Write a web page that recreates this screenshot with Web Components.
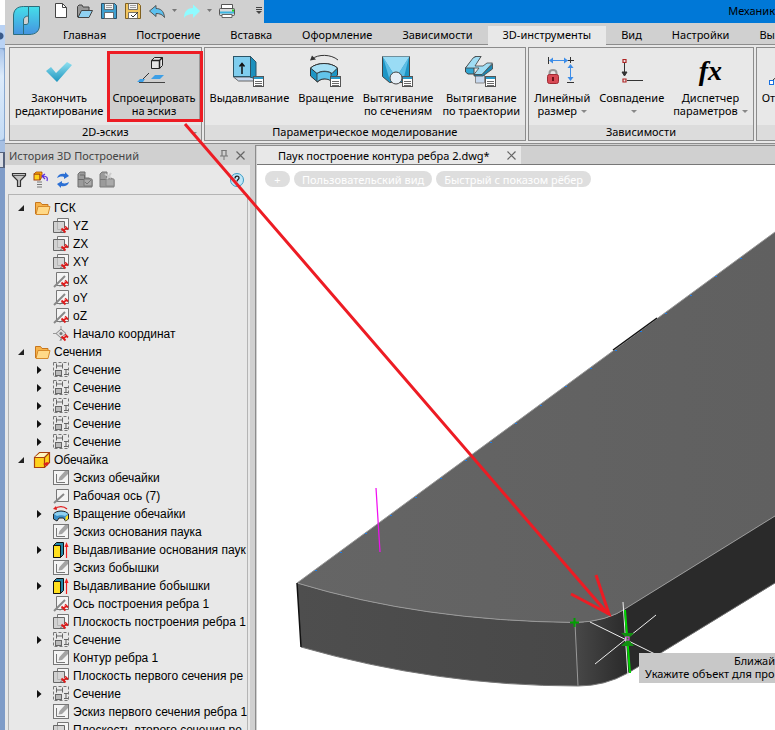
<!DOCTYPE html>
<html lang="ru">
<head>
<meta charset="utf-8">
<title>Механика</title>
<style>
html, body { margin: 0; height: 100%; }
body { font: 11px/13px "Noto Sans", "Open Sans", sans-serif; color: #000; overflow: hidden; background: #fff; }
</style>
</head>
<body>
<cad-app></cad-app>
<script>
const svg = (w, h, body) => `<svg width="${w}" height="${h}" viewBox="0 0 ${w} ${h}" fill="none" aria-hidden="true">${body}</svg>`;

const pin = '<path d="M7 14.5l3-3" stroke="#666"/><path d="M8.5 10.5l4 4M10.5 12.5l3-3M12 8.5l3 3" stroke="#dd1c1c" stroke-width="1.8"/><path d="M11 11l2-2" stroke="#ff7a7a" stroke-width=".8"/>';
const listBadge = '<rect x="20.5" y="21.5" width="10" height="10" fill="#fff" stroke="#555"/><path d="M21 23h9" stroke="#2a9ac8" stroke-width="2"/><path d="M22 26.5h7M22 28.5h7M22 30.5h7" stroke="#444" stroke-width=".8"/>';
const floppy = '<path d="M.5 .5h13l2 2v13H.5z" fill="#3fa0d0" stroke="#2b4f66"/><path d="M3.5 .5h9v6h-9z" fill="#f4f4f4" stroke="#555" stroke-width=".8"/><path d="M5 2.5h6M5 4.5h6" stroke="#888" stroke-width=".8"/><path d="M3.5 9.5h9v6h-9z" fill="#fff" stroke="#555" stroke-width=".8"/>';

const ICONS = {
  logo: svg(27, 29, '<defs><linearGradient id="g" x1="0" y1="0" x2="0" y2="29" gradientUnits="userSpaceOnUse"><stop offset="0" stop-color="#45e0ea"/><stop offset="1" stop-color="#4592e0"/></linearGradient></defs><path d="M10.5 .5H15.5V10C12 10 10.5 12 10.5 14V28.5H.5V10C.5 4 4 .5 10.5 .5z" fill="url(#g)" stroke="#2d6d7c"/><path d="M15.5 .5H26.5V19C26.5 25 23 28.5 16 28.5H10.5V18.5H13C15 18.5 15.5 17 15.5 16z" fill="url(#g)" stroke="#2d6d7c"/>'),
  file: svg(16, 17, '<path d="M2.5 1.5h7l4 4v10h-11z" fill="#fff" stroke="#444"/><path d="M9.5 1.5v4h4" stroke="#444"/>'),
  open: svg(16, 16, '<path d="M.5 14V3.5l1.5-1.5h3l1 2h6v3" fill="#999" stroke="#444"/><path d="M1 14.5l3.5-7h11l-3.5 7z" fill="#8fd0f0" stroke="#444"/>'),
  save: svg(16, 16, floppy),
  saveas: svg(16, 16, floppy.replace('#3fa0d0', '#f2c660').replace('#2b4f66', '#806020') + '<path d="M6 12l2 2 5-5" stroke="#333"/>'),
  undo: svg(16, 16, '<path d="M.5 8L7 2.5v3c4 0 8 2 8.5 9-2-3-4.5-4-8.5-4v3z" fill="#5cc0ee" stroke="#4a4a4a" stroke-width=".9"/>'),
  redo: svg(16, 16, '<path d="M16 8L9 1.5v3.5C4 5 0 8 0 15c2-3 5-4 9-4v4z" fill="#8ffbff"/>'),
  caret: svg(5, 3, '<path d="M0 0h5L2.5 3z" fill="#777"/>'),
  print: svg(16, 16, '<path d="M2.5 6V1.5h11V6" fill="#fff" stroke="#555"/><rect x=".5" y="5.5" width="15" height="7" rx="1" fill="#d8d8d8" stroke="#555"/><path d="M1 9.5h14" stroke="#3cb4e0" stroke-width="2"/><path d="M13 7.5h2" stroke="#2c2" stroke-width="2"/><path d="M3 11.5h10v3H3z" fill="#fff" stroke="#666"/>'),
  custom: svg(6, 7, '<path d="M0 .5h6M0 2.5h6" stroke="#444"/><path d="M0 4h6L3 7z" fill="#444"/>'),

  check: svg(32, 32, '<defs><linearGradient id="c" x1="0" y1="0" x2="0" y2="1"><stop offset="0" stop-color="#8fe0f0"/><stop offset="1" stop-color="#1f96bf"/></linearGradient></defs><path d="M3 16l5-4 5 6L24 7l5 3-15 17z" fill="url(#c)"/>'),
  project: svg(32, 32, '<path d="M13.5 5.5l3-3h8v8l-3 3h-8z" fill="#e4e4e4" stroke="#222"/><path d="M13.5 5.5h8v8M21.5 5.5l3-3" stroke="#222" stroke-width="1.5"/><path d="M1 27.5h26" stroke="#444"/><path d="M3 26l8-8" stroke="#333"/><path d="M-1 27l3-3h5l-2 3zM13 24l4-4h9l-4 4z" fill="#3d9fe6"/>'),
  extrude: svg(32, 32, '<path d="M.5 22l5 4h15v-4z" fill="#c6d8ee" stroke="#666"/><path d="M17 1l6 6v17l-6-2z" fill="#1b90bd" stroke="#2a5568"/><rect x=".5" y="1.5" width="17" height="20" fill="#7fcdee" stroke="#2a5568"/><path d="M9 19V9M6.5 11.5L9 8.5l2.5 3" stroke="#111" stroke-width="1.5"/>' + listBadge),
  revolve: svg(32, 32, '<path d="M2 4C8-1 21-1 28 5" stroke="#333"/><path d="M0 5.5l2-5 4 4z" fill="#333"/><path d="M.5 13C7 7 21 7 27.5 13v7l-6 6c-4-3-10-3-14 1l-7-6z" fill="#1d96c5" stroke="#333"/><path d="M.5 13C7 7 21 7 27.5 13L22 18.5c-4-3-11-3-15 0z" fill="#a6e0f6" stroke="#333"/><path d="M7 18.5V27c4-4 10-4 14-1v-8c-4-2-10-2-14 .5z" fill="#62c4ea" stroke="#333" stroke-width=".8"/>' + listBadge),
  loft: svg(32, 32, '<path d="M.5 1.5h27v20l-7 6h-13l-7-6z" fill="#1d96c5" stroke="#444"/><path d="M.5 1.5h27L17 18h-6z" fill="#9adcf5"/><path d="M1 2l10 16-3 8zM27 2L17 18l4 8z" fill="#5bbde4"/><circle cx="14" cy="23" r="6" fill="#e6eef5" stroke="#444"/>' + listBadge),
  sweep: svg(32, 32, '<path d="M10.5 19h9v9h-9z" fill="#c6d8ee" stroke="#888"/><path d="M.5 13L10 1.5h6L9 11v8H3L.5 17z" fill="#2fa5d2" stroke="#444"/><path d="M27.5 9v5L18 21H9v-2h8z" fill="#1b88b4" stroke="#444" stroke-width=".8"/><path d="M.5 13L8 3l3-1.5h5L10 11h8l4-3h5.5L17 19.5H9L14 13z" fill="#a0ddf4" stroke="#444" stroke-width=".8"/>' + listBadge),
  linear: svg(32, 32, '<path d="M2.5 2v7M20 5.5h8M24.5 2v6M21 27.5h7" stroke="#333"/><path d="M4 5.5h18M24.5 10v15" stroke="#3d8de8"/><path d="M3 5.5l4-3v6zM22 5.5l-4-3v6zM24.5 9l-3 4h6zM24.5 26l-3-4h6z" fill="#3d8de8"/><path d="M3.5 20v-2c0-4 7-4 7 0v2" stroke="#999" stroke-width="2"/><rect x="1.5" y="19.5" width="11" height="9" rx="2" fill="#d84a55" stroke="#a02a33"/><path d="M7 22v4" stroke="#701018" stroke-width="2"/>'),
  coincide: svg(32, 32, '<path d="M8.5 8v10" stroke="#333"/><path d="M6 17h5l-2.5 4zM11 25.5h16" fill="#333" stroke="#333"/><path d="M7 4.5h3v3H7zM7 24h3v3H7z" stroke="#b02525" stroke-width="1.2"/>'),
  line: svg(32, 32, '<path d="M5 25L20 12" stroke="#333"/><rect x="1.5" y="25.5" width="4" height="4" fill="#fff" stroke="#1870e0"/>'),

  filter: svg(14, 14, '<path d="M.5 .5h13v2l-5 5v6h-3v-6l-5-5z" fill="#c4c4c4" stroke="#333" stroke-width="1.2"/><path d="M1 2.5h12" stroke="#555"/>'),
  rollback: svg(17, 17, '<rect x="1" y="3" width="6" height="6" fill="#ffd21c" stroke="#a34310"/><path d="M1 3l2-2h6v5L7 9V3z" fill="#ffb000" stroke="#a34310" stroke-width=".8"/><path d="M4 11h5M4 13.5h5M4 16h5" stroke="#777"/><path d="M14 10c1-3 0-5-4-5M12 3l-3 2 3 3" stroke="#5b2be0" stroke-width="1.2"/>'),
  refresh: svg(14, 16, '<path d="M1 6c1-4 5-5 8-4V0l4 4-5 3V5C5 4 3 5 1 6z" fill="#2b6fd4"/><path d="M13 10c-1 4-5 5-8 4v2l-4-4 5-3v2c3 1 5 0 7-1z" fill="#2b6fd4"/>'),
  cubes: svg(16, 16, '<path d="M1 2l2-2h5l0 6h4l3 2v7H1z" fill="#9b9b9b" stroke="#6f6f6f"/><path d="M1 7.5h7M7.5 3v11M3 3h4" stroke="#6a6a6a"/><path d="M7 7h8v7H7z" fill="#aaa" stroke="#777"/><path d="M8 10l2 2 4-4" stroke="#777"/>'),
  cubesx: svg(16, 16, '<path d="M1 2l2-2h5l0 6h4l3 2v7H1z" fill="#9b9b9b" stroke="#7a7a7a"/><path d="M1 7.5h7M7.5 3v11" stroke="#777"/><path d="M7 7h8v7H7z" fill="#aaa" stroke="#888"/><path d="M6 2l6 4M12 1L8 7" stroke="#ccc" stroke-width="2"/>'),
  help: svg(14, 14, '<circle cx="7" cy="7" r="6.5" fill="#bfe6f7" stroke="#3a9cc4"/><path d="M5 5.5c0-3 4-3 4-.5 0 1.5-2 1.5-2 3.5M7 10v1.5" stroke="#222" stroke-width="1.3"/>'),
  pushpin: svg(8, 10, '<path d="M2 0v6M6 0v6" stroke="#777" stroke-width="1.2"/><path d="M1.5 .5h5M0 6h8M4 6v4" stroke="#777"/>'),
  close: svg(9, 9, '<path d="M.5 .5l8 8M8.5 .5l-8 8" stroke="#666" stroke-width="1.2"/>'),

  folder: svg(17, 16, '<path d="M1.5 14V2.5h5l1.5 2h6v3" fill="#f7b34a" stroke="#c8761c"/><path d="M2 14.5l2-8h12l-2 8z" fill="#ffd988" stroke="#d68a2c"/>'),
  plane: svg(17, 16, '<path d="M4.5 .5h11v11h-11z" fill="#f6f6f6" stroke="#777"/><path d="M.5 3.5h11v11H.5z" fill="#c9c9c9" fill-opacity=".75" stroke="#666"/>' + pin),
  axis: svg(17, 16, '<path d="M3.5 .5h12v13h-12z" fill="#f4f4f4" stroke="#777"/><path d="M1 15L12 4" stroke="#888" stroke-width="2"/>' + pin),
  workaxis: svg(17, 16, '<path d="M3.5 1.5h12v12h-12z" fill="#f4f4f4" stroke="#777"/><path d="M1 15L11 6" stroke="#888" stroke-width="2"/>'),
  origin: svg(17, 16, '<path d="M8 0v3M0 7.5h3M8 12v3" stroke="#999"/><path d="M8 3l5 4.5-5 4.5-5-4.5z" fill="#ddd" stroke="#888"/><circle cx="8" cy="7.5" r="1.5" fill="#777"/>' + pin),
  section: svg(17, 16, '<rect x=".5" y=".5" width="15" height="14" stroke="#777" stroke-dasharray="3 2"/><path d="M3.5 1.5v5M9.5 1.5v5M3.5 4h6M11 7.5h4M13 7.5v5M11 12.5h4" stroke="#666"/><rect x="2.5" y="8.5" width="6" height="5" fill="#bbb" stroke="#666"/>'),
  body: svg(17, 17, '<path d="M.5 5.5l5-5h10v10l-5 5H.5z" fill="#ffd21c" stroke="#a8400f" stroke-width="1.2"/><path d="M1 5l5-4h9l-4 4z" fill="#fff6c0"/><path d="M.5 5.5h10v10M10.5 5.5l5-5" stroke="#a8400f" stroke-width="1.2"/><path d="M9 12l4-2 2 1-2 3z" fill="#e02020"/>'),
  sketch: svg(17, 16, '<rect x=".5" y=".5" width="15" height="14" fill="#f4f4f4" stroke="#777"/><path d="M3.5 4v8.5H12" stroke="#777"/><path d="M5.5 10.5L6.5 7 12 1h3v3L9 10z" fill="#a4a4a4"/>'),
  spin: svg(17, 16, '<path d="M2 3C5-.5 11 0 14 3" stroke="#e02020" stroke-width="1.3"/><path d="M0 3l3-3 1 4z" fill="#e02020"/><path d="M.5 8c3-4 12-4 15 0v5l-3 2-2-3H6l-2 3-3.5-2z" fill="#3b8fc8" stroke="#222"/><path d="M1 8c3-3 11-3 14 0l-3 2c-2-1-6-1-8 0z" fill="#8fd0ef"/><path d="M12.5 11l2.5-2v4l-2.5 2z" fill="#ffe020"/>'),
  pull: svg(17, 16, '<path d="M.5 3.5l3-3h7v12l-3 3h-7z" fill="#28a" stroke="#111"/><path d="M.5 3.5h7v12h-7z" fill="#ffdf1e" stroke="#111"/><path d="M13.5 16V3" stroke="#f02020" stroke-width="1.2"/><path d="M11.5 5l2-5 2 5z" fill="#f02020"/>'),
  expanded: svg(7, 7, '<path d="M6 0v6H0z" fill="#222"/>'),
  collapsed: svg(5, 8, '<path d="M0 0l4.5 4L0 8z" fill="#111"/>')
};

const define = (name, render) => customElements.define(name, class extends HTMLElement {
  connectedCallback() {
    if (this.shadowRoot) return;
    this.attachShadow({ mode: 'open' }).innerHTML = render(this);
  }
});
const RESET = 'button{font:inherit;color:inherit;background:none;border:0;padding:0;margin:0}svg{display:block}*{box-sizing:border-box}';

define('cad-icon', el => `<style>:host{display:block;flex:none}svg{display:block;overflow:visible}</style>${ICONS[el.getAttribute('name')]}`);

define('edge-strip', () => `<style>
:host{display:flex;flex-direction:column;width:5px;flex:none;background:#7f9cc8;overflow:hidden}
div{flex:none}
.a{height:25px;background:#fff}
.b{height:23px;background:radial-gradient(circle at 0 11px,#3a5a8a 3px,#b9d2f4 4px)}
.c{height:91px;background:linear-gradient(#a9c4ea,#dcebfb 30%,#c3dbf5);border:1px solid #88a8d0;border-left:0;border-radius:0 4px 4px 0}
.d{height:11px;background:#a6bfe2}
.e{height:14px;background:#d8dce4;border:1px solid #55627c;border-width:1px 2px 1px 0}
</style><div class="a"></div><div class="b"></div><div class="c"></div><div class="d"></div><div class="e"></div>`);

define('quick-bar', () => {
  const b = (icon, label, cls = '') => `<button class="${cls}" aria-label="${label}"><cad-icon name="${icon}"></cad-icon></button>`;
  return `<style>${RESET}
:host{display:flex;background:#d0d0d0;padding-left:4px;box-sizing:border-box}
button{width:24px;height:21px;display:grid;place-items:center;flex:none}
.n{width:11px}.e{width:10px;margin-left:auto}
</style>${b('file', 'Создать')}${b('open', 'Открыть')}${b('save', 'Сохранить')}${b('saveas', 'Сохранить как')}${b('undo', 'Отменить')}${b('caret', 'Список отмены', 'n')}${b('redo', 'Повторить')}${b('caret', 'Список повтора', 'n')}${b('print', 'Печать')}${b('custom', 'Настроить', 'e')}`;
});

define('app-header', () => `<style>${RESET}
:host{display:grid;grid-template-columns:40px 219px minmax(0,1fr);grid-template-rows:23px 22px;background:#d0d0d0;flex:none}
.logo{grid-row:1/3;display:grid;place-items:center;padding:0 0 4px 2px;border-bottom:1px solid #8c8c8c}
.title{background:#0078d7;display:flex;justify-content:flex-end;align-items:center;overflow:hidden;white-space:nowrap;padding-bottom:2px}
nav{grid-column:2/4;display:flex;overflow:hidden;min-width:0}
nav button{flex:none;padding:2px 15px 0;height:22px;border-bottom:1px solid #8c8c8c}
nav::before{content:"";flex:none;width:3px;border-bottom:1px solid #8c8c8c}
nav .on{background:#e8e8e8;height:19px;align-self:flex-end;border-bottom-color:#e8e8e8;padding-top:0;padding-bottom:2px}
</style><button class="logo" aria-label="Меню программы"><cad-icon name="logo"></cad-icon></button><quick-bar></quick-bar><div class="title">Механик</div>
<nav>${['Главная', 'Построение', 'Вставка', 'Оформление', 'Зависимости', '3D-инструменты', 'Вид', 'Настройки', 'Вывод'].map(t => `<button${t[0] === '3' ? ' class="on"' : ''}>${t}</button>`).join('')}</nav>`);

define('ribbon-button', el => `<style>${RESET}
:host{display:block;flex:none}
button{width:100%;height:100%;padding:3px 3px 0;border:1px solid transparent;display:flex;flex-direction:column;align-items:center;text-align:center;white-space:nowrap}
:host([active]) button{background:#cfcfcf;border-color:#9a9a9a}
cad-icon{margin-bottom:4px}
.fx{font:italic bold 28px/32px "Liberation Serif",serif;height:32px;margin-bottom:4px}
i{display:inline-block;border:3px solid transparent;border-top-color:#888;border-bottom:0;margin-left:4px;vertical-align:2px}
</style><button>${el.getAttribute('icon') === 'fx' ? '<span class="fx">fx</span>' : `<cad-icon name="${el.getAttribute('icon')}"></cad-icon>`}<span><slot></slot>${el.hasAttribute('menu') ? '<i></i>' : ''}</span></button>`);

define('ribbon-panel', el => `<style>
:host{display:flex;flex-direction:column;flex:none;border:1px solid #8c8c8c;height:94px;box-sizing:border-box}
.row{display:flex;gap:1px;padding:3px 1px 4px;flex:1;min-height:0}
footer{height:15px;background:#dcdcdc;text-align:center;position:relative;white-space:nowrap}
:host([more]) footer::after{content:"";position:absolute;right:4px;top:7px;border:3px solid transparent;border-top-color:#888;border-bottom:0}
</style><div class="row"><slot></slot></div><footer>${el.getAttribute('label')}</footer>`);

define('cad-ribbon', () => `<style>
:host{display:flex;gap:2px;padding:2px 0 2px 4px;background:#e8e8e8;border-bottom:1px solid #8c8c8c;flex:none;overflow:hidden}
</style>
<ribbon-panel label="2D-эскиз" more><ribbon-button icon="check">Закончить<br>редактирование</ribbon-button><ribbon-button icon="project" active>Спроецировать<br>на эскиз</ribbon-button></ribbon-panel>
<ribbon-panel label="Параметрическое моделирование"><ribbon-button icon="extrude">Выдавливание</ribbon-button><ribbon-button icon="revolve">Вращение</ribbon-button><ribbon-button icon="loft">Вытягивание<br>по сечениям</ribbon-button><ribbon-button icon="sweep">Вытягивание<br>по траектории</ribbon-button></ribbon-panel>
<ribbon-panel label="Зависимости"><ribbon-button icon="linear" menu>Линейный<br>размер</ribbon-button><ribbon-button icon="coincide" menu>Совпадение<br></ribbon-button><ribbon-button icon="fx" menu>Диспетчер<br>параметров</ribbon-button></ribbon-panel>
<ribbon-panel label=""><ribbon-button icon="line">Отрезок</ribbon-button></ribbon-panel>`);

define('tree-item', el => `<style>${RESET}
:host{display:flex;align-items:center;height:18px;padding-left:9px;white-space:nowrap}
:host([level="2"]){padding-left:28px}
button{width:16px;height:16px;flex:none;display:flex;align-items:center}
.i{width:17px;flex:none;margin-right:3px}
</style><button aria-label="Развернуть"${el.hasAttribute('state') ? '' : ' tabindex="-1" disabled'}>${el.hasAttribute('state') ? `<cad-icon name="${el.getAttribute('state')}"></cad-icon>` : ''}</button><cad-icon class="i" name="${el.getAttribute('icon')}"></cad-icon><slot></slot>`);

const TREE = [
  [1, 'folder', 'ГСК', 'expanded'], [2, 'plane', 'YZ'], [2, 'plane', 'ZX'], [2, 'plane', 'XY'],
  [2, 'axis', 'oX'], [2, 'axis', 'oY'], [2, 'axis', 'oZ'], [2, 'origin', 'Начало координат'],
  [1, 'folder', 'Сечения', 'expanded'],
  ...Array(5).fill([2, 'section', 'Сечение', 'collapsed']),
  [1, 'body', 'Обечайка', 'expanded'], [2, 'sketch', 'Эскиз обечайки'], [2, 'workaxis', 'Рабочая ось (7)'],
  [2, 'spin', 'Вращение обечайки', 'collapsed'], [2, 'sketch', 'Эскиз основания паука'],
  [2, 'pull', 'Выдавливание основания паук', 'collapsed'], [2, 'sketch', 'Эскиз бобышки'],
  [2, 'pull', 'Выдавливание бобышки', 'collapsed'], [2, 'axis', 'Ось построения ребра 1'],
  [2, 'plane', 'Плоскость построения ребра 1'], [2, 'section', 'Сечение', 'collapsed'],
  [2, 'sketch', 'Контур ребра 1'], [2, 'plane', 'Плоскость первого сечения ре'],
  [2, 'section', 'Сечение', 'collapsed'], [2, 'sketch', 'Эскиз первого сечения ребра 1'],
  [2, 'plane', 'Плоскость второго сечения ре']
];

define('history-dock', () => `<style>${RESET}
:host{display:flex;flex-direction:column;width:245px;flex:none;background:#e8e8e8;overflow:hidden}
header{display:flex;align-items:center;height:19px;flex:none;background:#d0d0d0;color:#444;padding:0 1px 1px 4px}
header span{flex:1}
header button{width:17px;display:grid;place-items:center}
.tools{display:flex;align-items:center;height:29px;flex:none;padding:0 5px 0 3px}
.tools button{width:22px;height:22px;display:grid;place-items:center}
.tools button:last-child{margin-left:auto;width:16px}
.tree{flex:1;min-height:0;overflow:hidden;border:1px solid #b4b4b4;border-bottom:0;margin:0 2px 0 3px;padding-top:4px;font:12px/18px "Liberation Sans",Arial,sans-serif}
</style>
<header><span>История 3D Построений</span><button aria-label="Закрепить"><cad-icon name="pushpin"></cad-icon></button><button aria-label="Закрыть"><cad-icon name="close"></cad-icon></button></header>
<div class="tools">${[['filter', 'Фильтр'], ['rollback', 'Откат'], ['refresh', 'Обновить'], ['cubes', 'Показать'], ['cubesx', 'Скрыть'], ['help', 'Справка']].map(([i, l]) => `<button aria-label="${l}"><cad-icon name="${i}"></cad-icon></button>`).join('')}</div>
<div class="tree">${TREE.map(([l, i, t, s]) => `<tree-item level="${l}" icon="${i}"${s ? ` state="${s}"` : ''}>${t}</tree-item>`).join('')}</div>`);

/* Marks that follow the upper edge of the plate */
const dots = Array.from({ length: 18 }, (_, i) => `<rect x="${58 + i * 25}" y="${405 - Math.round(i * 18.35)}" width="2" height="1" fill="#1a7be8"/>`).join('');

define('model-view', () => `<style>${RESET}
:host{display:block;position:relative;flex:1;min-height:0;overflow:hidden;background:#fff}
svg{position:absolute;left:0;top:0;overflow:visible}
.pills{position:relative;z-index:1;display:flex;gap:4px;padding:6px 8px;color:#fff}
.pills button{background:#dedede;border-radius:8px;height:16px;line-height:15px;padding:0 8px;min-width:25px;flex:none}
.tip{position:absolute;left:382px;right:0;top:488px;background:#c8c8c8;padding:1px 0 3px 6px;white-space:nowrap;overflow:hidden}
.tip div:first-child{text-align:right}
</style>
<svg width="518" height="565" viewBox="0 0 518 565" fill="none" aria-hidden="true">
<defs>
<linearGradient id="f" gradientUnits="userSpaceOnUse" x1="40" y1="0" x2="371" y2="0"><stop offset="0" stop-color="#4e4e4e"/><stop offset=".84" stop-color="#484848"/><stop offset=".93" stop-color="#373737"/><stop offset="1" stop-color="#2a2a2a"/></linearGradient>
<linearGradient id="t" x1="0" y1="0" x2="1" y2="0"><stop offset="0" stop-color="#656565"/><stop offset="1" stop-color="#606060"/></linearGradient>
</defs>
<path d="M40 418Q165 456 318 457.5Q350 457 371 442L518 351V418L371 508Q348 521 321 521Q180 521 44 482Z" fill="url(#f)"/>
<path d="M371 442L518 351V418L371 508Z" fill="#2a2a2a"/>
<path d="M40 418L518 67V351L371 442Q350 457 318 457.5Q165 456 40 418Z" fill="url(#t)"/>
<path d="M518 67L40 418Q165 456 318 457.5Q350 457 371 442L518 351M318 458l3 63" stroke="#999"/>
<path d="M44 482Q180 521 321 521Q348 521 371 508L518 418" stroke="#777"/>
<path d="M40 418l4 64M356 185l44-32" stroke="#111" stroke-width="1.5"/>
${dots}
<path d="M119 323l4 64" stroke="#f010f0" stroke-width="1.2"/>
<path d="M333 457l65 32M338 499l61-49M366 437l5 74" stroke="#eee"/>
<path d="M368 445l5 63" stroke="#00d800" stroke-width="2"/>
<path d="M317.5 453v9M313 457.5h9" stroke="#00a000" stroke-width="2"/>
<path d="M364 468h13l-6 6zM364 481h13l-6-7z" fill="#109010"/>
<rect x="369" y="472" width="3" height="3" stroke="#f040f0"/>
</svg>
<div class="pills"><button>+</button><button>Пользовательский вид</button><button>Быстрый с показом рёбер</button></div>
<div class="tip"><div>Ближай</div><div>Укажите объект для про</div></div>`);

define('document-area', () => `<style>${RESET}
:host{display:flex;flex-direction:column;flex:1;min-width:0;border:solid #8c8c8c;border-width:1px 0 0 1px;padding-left:1px;background:#d0d0d0}
.tabs{display:flex;height:19px;flex:none;border-bottom:1px solid #777}
.tab{display:flex;align-items:center;gap:17px;background:#e8e8e8;padding:0 5px 0 21px;white-space:nowrap}
</style>
<div class="tabs"><div class="tab"><span>Паук построение контура ребра 2.dwg*</span><button aria-label="Закрыть документ"><cad-icon name="close"></cad-icon></button></div></div><model-view></model-view>`);

/* Red marker strokes over the whole window */
define('red-markup', () => `<style>:host{position:absolute;left:0;top:0;z-index:5;pointer-events:none}svg{display:block;overflow:visible}</style>
<svg width="620" height="620" viewBox="0 0 620 620" fill="none" stroke="#ed1c24" stroke-width="3" aria-hidden="true"><rect x="108.5" y="52.5" width="93" height="68"/><path d="M185 124L608 614M571 594l38 20-13-39"/></svg>`);

define('cad-app', () => `<style>
:host{display:flex;height:100vh;overflow:hidden;position:relative;background:#d0d0d0}
.main{display:flex;flex-direction:column;flex:1;min-width:0}
.work{display:flex;flex:1;min-height:0;gap:5px;padding-top:1px}
history-dock{margin-top:1px}
</style><edge-strip></edge-strip><div class="main"><app-header></app-header><cad-ribbon></cad-ribbon><div class="work"><history-dock></history-dock><document-area></document-area></div></div><red-markup></red-markup>`);
</script>
</body>
</html>
